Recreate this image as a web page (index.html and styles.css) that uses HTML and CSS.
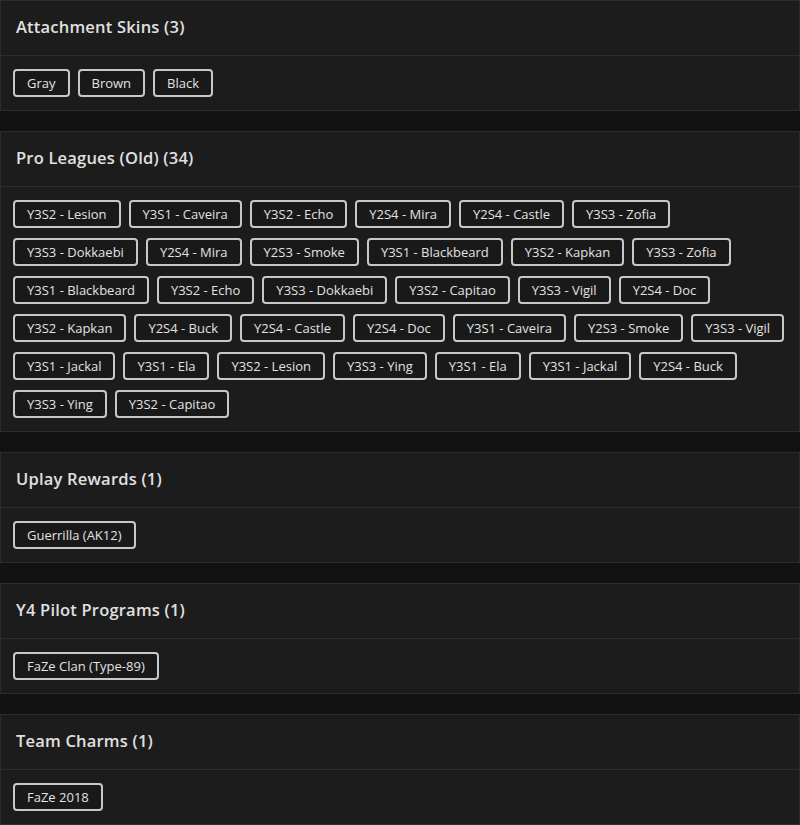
FILE: index.html
```html
<!DOCTYPE html>
<html>
<head>
<meta charset="utf-8">
<link rel="stylesheet" href="styles.css">
</head>
<body>
<section class="card">
  <h2 class="card-title">Attachment Skins (3)</h2>
  <div class="card-body">
    <span class="tag">Gray</span><span class="tag">Brown</span><span class="tag">Black</span>
  </div>
</section>
<section class="card">
  <h2 class="card-title">Pro Leagues (Old) (34)</h2>
  <div class="card-body">
    <span class="tag">Y3S2 - Lesion</span><span class="tag">Y3S1 - Caveira</span><span class="tag">Y3S2 - Echo</span><span class="tag">Y2S4 - Mira</span><span class="tag">Y2S4 - Castle</span><span class="tag">Y3S3 - Zofia</span>
    <span class="tag">Y3S3 - Dokkaebi</span><span class="tag">Y2S4 - Mira</span><span class="tag">Y2S3 - Smoke</span><span class="tag">Y3S1 - Blackbeard</span><span class="tag">Y3S2 - Kapkan</span><span class="tag">Y3S3 - Zofia</span>
    <span class="tag">Y3S1 - Blackbeard</span><span class="tag">Y3S2 - Echo</span><span class="tag">Y3S3 - Dokkaebi</span><span class="tag">Y3S2 - Capitao</span><span class="tag">Y3S3 - Vigil</span><span class="tag">Y2S4 - Doc</span>
    <span class="tag">Y3S2 - Kapkan</span><span class="tag">Y2S4 - Buck</span><span class="tag">Y2S4 - Castle</span><span class="tag">Y2S4 - Doc</span><span class="tag">Y3S1 - Caveira</span><span class="tag">Y2S3 - Smoke</span><span class="tag">Y3S3 - Vigil</span>
    <span class="tag">Y3S1 - Jackal</span><span class="tag">Y3S1 - Ela</span><span class="tag">Y3S2 - Lesion</span><span class="tag">Y3S3 - Ying</span><span class="tag">Y3S1 - Ela</span><span class="tag">Y3S1 - Jackal</span><span class="tag">Y2S4 - Buck</span>
    <span class="tag">Y3S3 - Ying</span><span class="tag">Y3S2 - Capitao</span>
  </div>
</section>
<section class="card">
  <h2 class="card-title">Uplay Rewards (1)</h2>
  <div class="card-body">
    <span class="tag">Guerrilla (AK12)</span>
  </div>
</section>
<section class="card">
  <h2 class="card-title">Y4 Pilot Programs (1)</h2>
  <div class="card-body">
    <span class="tag">FaZe Clan (Type-89)</span>
  </div>
</section>
<section class="card">
  <h2 class="card-title">Team Charms (1)</h2>
  <div class="card-body">
    <span class="tag">FaZe 2018</span>
  </div>
</section>
</body>
</html>
```
FILE: styles.css
```css
html, body {
  margin: 0;
  padding: 0;
  background: #121212;
}
body {
  font-family: "Open Sans", "Noto Sans", sans-serif;
  color: #e2e2e2;
}
.card {
  background: #1c1c1c;
  border: 1px solid #2c2c2c;
  margin-bottom: 20px;
}
.card-title {
  box-sizing: border-box;
  margin: 0;
  height: 54px;
  display: flex;
  align-items: center;
  padding: 0 15px 3px;
  font-size: 16.5px;
  font-weight: 600;
  color: #e0e0e0;
  border-bottom: 1px solid #2c2c2c;
  letter-spacing: 0.2px;
}
.card-title {
  height: 55px;
}
.card-body {
  padding: 13px 12px;
  display: flex;
  flex-wrap: wrap;
  gap: 10px 8px;
}
.tag {
  box-sizing: border-box;
  height: 28px;
  display: inline-flex;
  align-items: center;
  padding: 0 12px;
  border: 2px solid #c8c8c8;
  border-radius: 4px;
  background: #191919;
  font-size: 13px;
  color: #e2e2e2;
  white-space: nowrap;
}
```
